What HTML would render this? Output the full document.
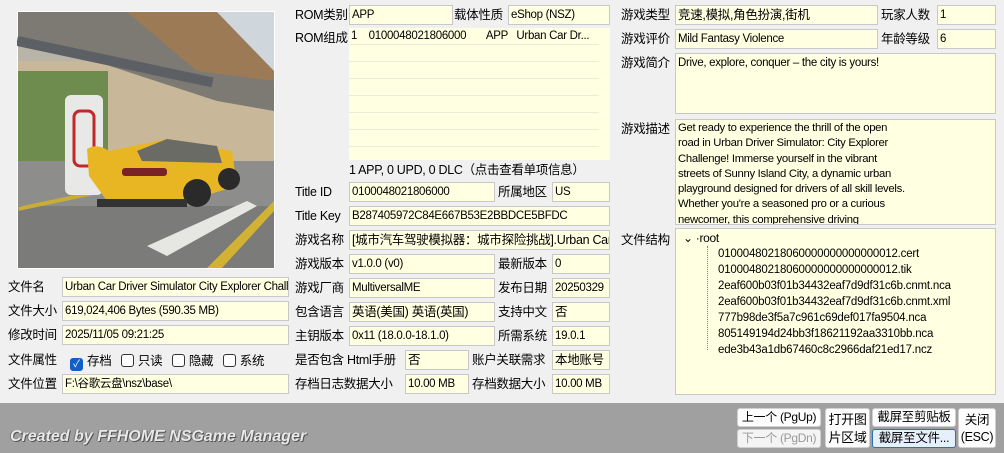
<!DOCTYPE html>
<html><head><meta charset="utf-8"><style>
*{margin:0;padding:0;box-sizing:border-box}
body{width:1004px;height:453px;background:#f0f0f0;position:relative;overflow:hidden;font-family:"Liberation Sans","Noto Sans CJK SC",sans-serif;font-size:12px;color:#000}
.l{position:absolute;font-size:12.5px;line-height:20px;white-space:nowrap;letter-spacing:-0.3px}
.f{position:absolute;background:#ffffe1;border:1px solid #c8c8c8;height:20px;line-height:18px;padding-left:2px;white-space:nowrap;overflow:hidden;font-size:11.5px;letter-spacing:-0.3px}
.btn{position:absolute;background:#fdfdfd;border:1px solid #d0d0d0;border-radius:3px;font-size:12px;text-align:center;line-height:17px;letter-spacing:-0.3px}
.cb{display:inline-block;width:13px;height:13px;border:1px solid #333;border-radius:3px;vertical-align:-2px;margin-right:4px;background:#fff}
.tr{position:absolute;left:718px;font-size:11.5px;line-height:16px;letter-spacing:-0.2px}
</style></head><body>
<svg style="position:absolute;left:17px;top:11px" width="258" height="258" viewBox="0 0 258 258">
<rect x="0" y="0" width="258" height="258" fill="#fff"/>
<rect x="1" y="1" width="256" height="256" fill="#b9b4a8"/>
<rect x="1" y="50" width="256" height="100" fill="#c9b79a"/>
<rect x="1" y="60" width="90" height="90" fill="#6d8c4d"/>
<polygon points="1,1 257,1 257,100 200,90 1,25" fill="#7d7a74"/>
<polygon points="110,1 257,1 257,70 180,60" fill="#9c7a56"/>
<polygon points="200,1 257,1 257,60" fill="#cfd6dc"/>
<rect x="1" y="25" width="200" height="10" fill="#5c5f63" transform="rotate(12 1 25)"/>
<rect x="1" y="150" width="256" height="107" fill="#8d8d8c"/>
<rect x="1" y="195" width="256" height="62" fill="#7b7b7a"/>
<polygon points="130,235 230,190 240,195 150,245" fill="#e6e6e2"/>
<polygon points="190,257 257,190 257,200 205,257" fill="#d2b233"/>
<rect x="1" y="196" width="80" height="4" fill="#c9ad36" transform="rotate(-12 1 196)"/>
<rect x="48" y="84" width="38" height="100" rx="6" fill="#e8e8e6"/>
<rect x="57" y="100" width="20" height="55" rx="6" fill="none" stroke="#c0282a" stroke-width="3"/>
<path d="M70,138 Q80,132 92,140 L150,128 L215,140 L220,175 L170,190 L90,190 L72,165 Z" fill="#e8b623"/>
<path d="M120,140 L150,128 L200,135 L205,152 L125,150 Z" fill="#6b6b66"/>
<rect x="105" y="157" width="45" height="8" rx="3" fill="#7a2326"/>
<circle cx="180" cy="182" r="14" fill="#2a2a2a"/><circle cx="212" cy="168" r="11" fill="#2a2a2a"/>
<rect x="80" y="188" width="90" height="8" fill="#333"/>
</svg>
<div class="l" style="left:8px;top:277px">文件名</div><div class="f" style="left:62px;top:277px;width:227px">Urban Car Driver Simulator City Explorer Challe</div>
<div class="l" style="left:8px;top:301px">文件大小</div><div class="f" style="left:62px;top:301px;width:227px">619,024,406 Bytes (590.35 MB)</div>
<div class="l" style="left:8px;top:325px">修改时间</div><div class="f" style="left:62px;top:325px;width:227px">2025/11/05 09:21:25</div>
<div class="l" style="left:8px;top:350px">文件属性</div>
<div class="l" style="left:70px;top:351px"><span class="cb" style="background:#0f5fc7;border-color:#0f5fc7;color:#fff;font-size:10px;line-height:11px;text-align:center">✓</span>存档 &nbsp;&nbsp;<span class="cb"></span>只读 &nbsp;&nbsp;<span class="cb"></span>隐藏 &nbsp;&nbsp;<span class="cb"></span>系统</div>
<div class="l" style="left:8px;top:374px">文件位置</div><div class="f" style="left:62px;top:374px;width:227px">F:\谷歌云盘\nsz\base\</div>

<div class="l" style="left:295px;top:5px">ROM类别</div><div class="f" style="left:349px;top:5px;width:104px">APP</div>
<div class="l" style="left:454px;top:5px">载体性质</div><div class="f" style="left:508px;top:5px;width:102px">eShop (NSZ)</div>
<div class="l" style="left:295px;top:28px">ROM组成</div>
<div style="position:absolute;left:349px;top:28px;width:250px;height:132px;background:#ffffe1;background-image:repeating-linear-gradient(#ffffe1 0 16px,#e8ecd8 16px 17px)"></div>
<div style="position:absolute;left:599px;top:28px;width:11px;height:132px;background:#ffffe1"></div>
<div class="l" style="left:351px;top:26px;font-size:11.5px;white-space:pre">1    0100048021806000       APP   Urban Car Dr...</div>
<div class="l" style="left:349px;top:160px">1 APP, 0 UPD, 0 DLC（点击查看单项信息）</div>
<div class="l" style="left:295px;top:182px">Title ID</div><div class="f" style="left:349px;top:182px;width:146px">0100048021806000</div>
<div class="l" style="left:498px;top:182px">所属地区</div><div class="f" style="left:552px;top:182px;width:58px">US</div>
<div class="l" style="left:295px;top:206px">Title Key</div><div class="f" style="left:349px;top:206px;width:261px">B287405972C84E667B53E2BBDCE5BFDC</div>
<div class="l" style="left:295px;top:230px">游戏名称</div><div class="f" style="left:349px;top:230px;width:261px;font-size:12.5px">[城市汽车驾驶模拟器：城市探险挑战].Urban Car</div>
<div class="l" style="left:295px;top:254px">游戏版本</div><div class="f" style="left:349px;top:254px;width:146px">v1.0.0 (v0)</div>
<div class="l" style="left:498px;top:254px">最新版本</div><div class="f" style="left:552px;top:254px;width:58px">0</div>
<div class="l" style="left:295px;top:278px">游戏厂商</div><div class="f" style="left:349px;top:278px;width:146px">MultiversalME</div>
<div class="l" style="left:498px;top:278px">发布日期</div><div class="f" style="left:552px;top:278px;width:58px">20250329</div>
<div class="l" style="left:295px;top:302px">包含语言</div><div class="f" style="left:349px;top:302px;width:146px;font-size:12.5px">英语(美国) 英语(英国)</div>
<div class="l" style="left:498px;top:302px">支持中文</div><div class="f" style="left:552px;top:302px;width:58px;font-size:12.5px">否</div>
<div class="l" style="left:295px;top:326px">主钥版本</div><div class="f" style="left:349px;top:326px;width:146px">0x11 (18.0.0-18.1.0)</div>
<div class="l" style="left:498px;top:326px">所需系统</div><div class="f" style="left:552px;top:326px;width:58px">19.0.1</div>
<div class="l" style="left:295px;top:350px">是否包含 Html手册</div><div class="f" style="left:405px;top:350px;width:64px;font-size:12.5px">否</div>
<div class="l" style="left:472px;top:350px">账户关联需求</div><div class="f" style="left:552px;top:350px;width:58px;font-size:12.5px">本地账号</div>
<div class="l" style="left:295px;top:374px">存档日志数据大小</div><div class="f" style="left:405px;top:374px;width:64px">10.00 MB</div>
<div class="l" style="left:472px;top:374px">存档数据大小</div><div class="f" style="left:552px;top:374px;width:58px">10.00 MB</div>

<div class="l" style="left:621px;top:5px">游戏类型</div><div class="f" style="left:675px;top:5px;width:203px;font-size:12.5px">竞速,模拟,角色扮演,街机</div>
<div class="l" style="left:881px;top:5px">玩家人数</div><div class="f" style="left:937px;top:5px;width:59px">1</div>
<div class="l" style="left:621px;top:29px">游戏评价</div><div class="f" style="left:675px;top:29px;width:203px">Mild Fantasy Violence</div>
<div class="l" style="left:881px;top:29px">年龄等级</div><div class="f" style="left:937px;top:29px;width:59px">6</div>
<div class="l" style="left:621px;top:53px">游戏简介</div><div class="f" style="left:675px;top:53px;width:321px;height:61px;line-height:16px;padding-top:1px">Drive, explore, conquer – the city is yours!</div>
<div class="l" style="left:621px;top:119px">游戏描述</div><div class="f" style="left:675px;top:119px;width:321px;height:106px;line-height:15.3px;white-space:normal;padding:1px 90px 0 2px;font-size:11.3px">Get ready to experience the thrill of the open road in Urban Driver Simulator: City Explorer Challenge! Immerse yourself in the vibrant streets of Sunny Island City, a dynamic urban playground designed for drivers of all skill levels. Whether you're a seasoned pro or a curious newcomer, this comprehensive driving simulation offers something for everyone.</div>
<div class="l" style="left:621px;top:230px">文件结构</div><div class="f" style="left:675px;top:228px;width:321px;height:167px"></div>
<div class="l" style="left:683px;top:228px;font-size:12px">⌄ ·root</div>
<div style="position:absolute;left:707px;top:246px;width:1px;height:104px;border-left:1px dotted #888"></div>
<div class="tr" style="top:246px">01000480218060000000000000012.cert</div>
<div class="tr" style="top:262px">01000480218060000000000000012.tik</div>
<div class="tr" style="top:278px">2eaf600b03f01b34432eaf7d9df31c6b.cnmt.nca</div>
<div class="tr" style="top:294px">2eaf600b03f01b34432eaf7d9df31c6b.cnmt.xml</div>
<div class="tr" style="top:310px">777b98de3f5a7c961c69def017fa9504.nca</div>
<div class="tr" style="top:326px">805149194d24bb3f18621192aa3310bb.nca</div>
<div class="tr" style="top:342px">ede3b43a1db67460c8c2966daf21ed17.ncz</div>

<div style="position:absolute;left:0;top:403px;width:1004px;height:50px;background:#a0a0a0"></div>
<div style="position:absolute;left:10px;top:428px;font-size:16px;font-weight:bold;font-style:italic;color:#e8e8e8;text-shadow:1px 1px 0 #555,-1px 0 0 #777">Created by FFHOME NSGame Manager</div>
<div class="btn" style="left:737px;top:408px;width:84px;height:19px">上一个 (PgUp)</div>
<div class="btn" style="left:737px;top:429px;width:84px;height:19px;color:#999;background:#f4f4f4">下一个 (PgDn)</div>
<div class="btn" style="left:825px;top:408px;width:45px;height:40px;line-height:18px;padding-top:2px;font-size:13px">打开图<br>片区域</div>
<div class="btn" style="left:872px;top:408px;width:84px;height:19px;font-size:12.5px">截屏至剪贴板</div>
<div class="btn" style="left:872px;top:429px;width:84px;height:19px;font-size:12.5px;border-color:#2a6fc0;background:#e6f0fb">截屏至文件...</div>
<div class="btn" style="left:958px;top:408px;width:38px;height:40px;line-height:17px;padding-top:3px;font-size:12.5px">关闭<br>(ESC)</div>
</body></html>
